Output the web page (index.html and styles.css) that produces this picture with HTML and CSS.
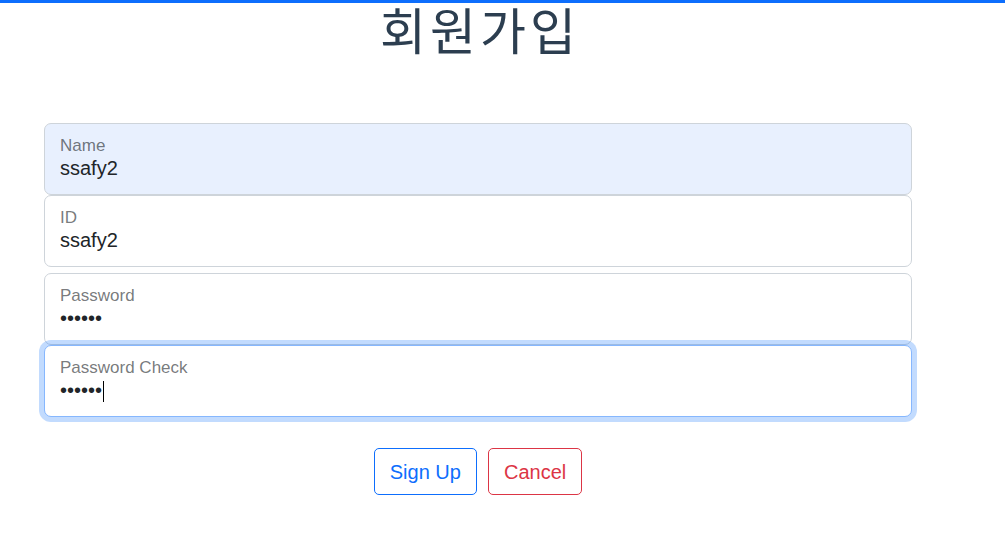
FILE: index.html
```html
<!DOCTYPE html>
<html lang="ko">
<head>
<meta charset="utf-8">
<title>회원가입</title>
<link rel="stylesheet" href="styles.css">
</head>
<body>
<div class="topbar"></div>
<main class="page">
  <h1 class="title">회원가입</h1>
  <form class="signup">
    <div class="group">
      <div class="field autofill">
        <label class="label" for="name">Name</label>
        <input class="control" id="name" type="text" value="ssafy2">
      </div>
      <div class="field">
        <label class="label" for="uid">ID</label>
        <input class="control" id="uid" type="text" value="ssafy2">
      </div>
    </div>
    <div class="group">
      <div class="field">
        <label class="label" for="pw">Password</label>
        <input class="control" id="pw" type="password" value="123456">
      </div>
      <div class="field focused">
        <label class="label" for="pw2">Password Check</label>
        <input class="control" id="pw2" type="password" value="123456">
        <span class="caret"></span>
      </div>
    </div>
    <div class="actions">
      <button type="button" class="btn btn-primary">Sign Up</button>
      <button type="button" class="btn btn-danger">Cancel</button>
    </div>
  </form>
</main>
</body>
</html>
```
FILE: styles.css
```css
* { box-sizing: border-box; }
html, body { margin: 0; padding: 0; background: #fff; }
body {
  font-family: "Liberation Sans", Arial, "Noto Sans CJK KR", sans-serif;
  color: #2c3e50;
}
.topbar { height: 3px; background: #0d6efd; }
.page {
  width: 868px;
  margin-left: 44px;
}
.title {
  margin: 0 0 70px;
  padding-left: 4px;
  text-align: center;
  font-family: "Noto Sans CJK KR", sans-serif;
  font-size: 50px;
  font-weight: 400;
  line-height: 50px;
  letter-spacing: 4px;
  color: #2c3e50;
}
.signup { display: flex; flex-direction: column; }
.group { display: flex; flex-direction: column; margin-bottom: 6px; }
.field {
  position: relative;
  display: flex;
  flex-direction: column;
  height: 72px;
  padding: 12px 15px 0;
  border: 1px solid #ced4da;
  border-radius: 7px;
  background: #fff;
}
.field.autofill { background: #e8f0fe; }
.field.focused {
  z-index: 2;
  border-color: #86b7fe;
  box-shadow: 0 0 0 5px rgba(13, 110, 253, 0.25);
}
.label {
  font-size: 17px;
  line-height: 20px;
  color: rgba(33, 37, 41, 0.62);
}
.control {
  margin: 0;
  padding: 0;
  border: 0;
  outline: none;
  background: transparent;
  font-family: "Liberation Sans", Arial, sans-serif;
  font-size: 20px;
  line-height: 25px;
  height: 25px;
  color: #212529;
}
.caret {
  position: absolute;
  left: 58px;
  top: 35px;
  width: 1px;
  height: 21px;
  background: #000;
}
.actions {
  display: flex;
  justify-content: center;
  gap: 11px;
  margin-top: 25px;
}
.btn {
  font-family: "Liberation Sans", Arial, sans-serif;
  font-size: 20px;
  line-height: 30px;
  padding: 7.5px 15px;
  border-radius: 5px;
  background: #fff;
  cursor: pointer;
}
.btn-primary { color: #0d6efd; border: 1px solid #0d6efd; }
.btn-danger { color: #dc3545; border: 1px solid #dc3545; }
```
